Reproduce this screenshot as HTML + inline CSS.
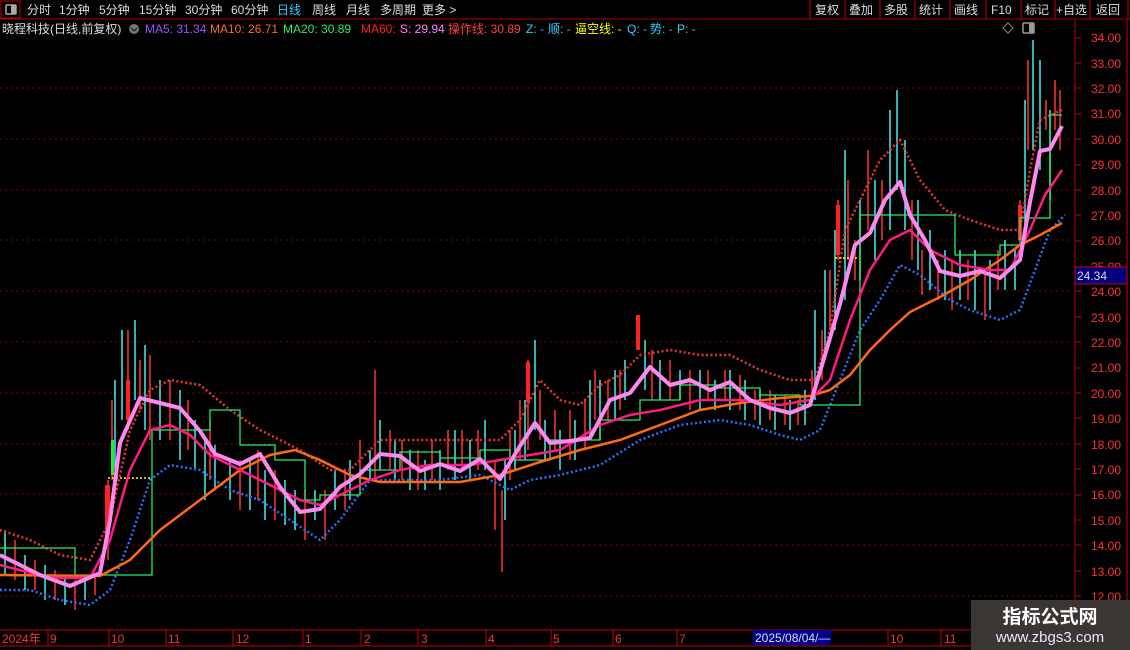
<!DOCTYPE html>
<html><head><meta charset="utf-8"><style>
html,body{margin:0;padding:0;background:#000;width:1130px;height:650px;overflow:hidden;font-family:"Liberation Sans","Noto Sans CJK SC",sans-serif;}
</style></head><body>
<svg width="1130" height="650" style="position:absolute;left:0;top:0" font-family="Liberation Sans, Noto Sans CJK SC, sans-serif">
<rect x="0" y="0" width="1130" height="19" fill="#000"/>
<line x1="0" y1="19" x2="1130" y2="19" stroke="#a00" />
<rect x="1" y="1" width="19" height="17" fill="none" stroke="#c00"/>
<rect x="6" y="5" width="10" height="9" rx="1" fill="none" stroke="#aaa" stroke-width="1.5"/><rect x="11" y="5" width="5" height="9" fill="#aaa"/>
<g font-size="12" fill="#ddd">
<text x="27" y="14">分时</text><text x="59" y="14">1分钟</text><text x="99" y="14">5分钟</text><text x="139" y="14">15分钟</text><text x="185" y="14">30分钟</text><text x="231" y="14">60分钟</text>
<text x="277" y="14" fill="#3cf">日线</text><text x="312" y="14">周线</text><text x="346" y="14">月线</text><text x="380" y="14">多周期</text><text x="422" y="14">更多 &gt;</text>
</g>
<g stroke="#c00" fill="none">
<line x1="810" y1="0" x2="810" y2="19"/><line x1="845" y1="0" x2="845" y2="19"/><line x1="880" y1="0" x2="880" y2="19"/><line x1="915" y1="0" x2="915" y2="19"/><line x1="950" y1="0" x2="950" y2="19"/><line x1="986" y1="0" x2="986" y2="19"/><line x1="1021" y1="0" x2="1021" y2="19"/><line x1="1055" y1="0" x2="1055" y2="19"/><line x1="1090" y1="0" x2="1090" y2="19"/><line x1="1128" y1="0" x2="1128" y2="19"/>
</g>
<g font-size="12" fill="#ddd">
<text x="815" y="14">复权</text><text x="849" y="14">叠加</text><text x="884" y="14">多股</text><text x="919" y="14">统计</text><text x="954" y="14">画线</text><text x="991" y="14">F10</text><text x="1025" y="14">标记</text><text x="1056" y="14">+自选</text><text x="1096" y="14">返回</text>
</g>
<g font-size="12">
<text x="2" y="33" fill="#ddd">晓程科技(日线,前复权)</text>
<circle cx="134" cy="29" r="5" fill="#777"/><path d="M131 28 L134 31 L137 28" stroke="#222" fill="none" stroke-width="1.3"/>
<text x="145" y="33" fill="#a050ff">MA5: 31.34</text>
<text x="210" y="33" fill="#ff6a1a">MA10: 26.71</text>
<text x="283" y="33" fill="#22ee66">MA20: 30.89</text>
<text x="361" y="33" fill="#ff2020">MA60: -</text>
<text x="400" y="33" fill="#ff80ff">S: 29.94</text>
<text x="448" y="33" fill="#ff4040">操作线: 30.89</text>
<text x="526" y="33" fill="#3cf">Z: -</text>
<text x="548" y="33" fill="#3cf">顺: -</text>
<text x="575" y="33" fill="#ff0">逼空线: -</text>
<text x="627" y="33" fill="#3cf">Q: -</text>
<text x="650" y="33" fill="#3cf">势: -</text>
<text x="677" y="33" fill="#3cf">P: -</text>
</g>
<path d="M1008 23 L1013 28 L1008 33 L1003 28Z" stroke="#888" fill="none"/>
<rect x="1023" y="23" width="11" height="10" rx="1" fill="none" stroke="#999" stroke-width="1.5"/><rect x="1029" y="23" width="5" height="10" fill="#999"/>
<line x1="1075" y1="20" x2="1075" y2="650" stroke="#c00"/>
<line x1="1127" y1="20" x2="1127" y2="650" stroke="#c00"/>
<g stroke="#a00" stroke-dasharray="1.5 4">
<line x1="0" y1="88" x2="1072" y2="88"/><line x1="0" y1="139" x2="1072" y2="139"/><line x1="0" y1="190" x2="1072" y2="190"/><line x1="0" y1="240" x2="1072" y2="240"/><line x1="0" y1="291" x2="1072" y2="291"/><line x1="0" y1="342" x2="1072" y2="342"/><line x1="0" y1="393" x2="1072" y2="393"/><line x1="0" y1="444" x2="1072" y2="444"/><line x1="0" y1="494" x2="1072" y2="494"/><line x1="0" y1="545" x2="1072" y2="545"/><line x1="0" y1="596" x2="1072" y2="596"/>
</g>
<g font-size="12" fill="#ff3030">
<text x="1091" y="42">34.00</text><text x="1091" y="68">33.00</text><text x="1091" y="93">32.00</text><text x="1091" y="118">31.00</text><text x="1091" y="144">30.00</text><text x="1091" y="169">29.00</text><text x="1091" y="195">28.00</text><text x="1091" y="220">27.00</text><text x="1091" y="245">26.00</text><text x="1091" y="271">25.00</text><text x="1091" y="296">24.00</text><text x="1091" y="322">23.00</text><text x="1091" y="347">22.00</text><text x="1091" y="372">21.00</text><text x="1091" y="398">20.00</text><text x="1091" y="423">19.00</text><text x="1091" y="449">18.00</text><text x="1091" y="474">17.00</text><text x="1091" y="499">16.00</text><text x="1091" y="525">15.00</text><text x="1091" y="550">14.00</text><text x="1091" y="576">13.00</text><text x="1091" y="601">12.00</text>
</g>
<g stroke="#c00"><path d="M1076 38h5M1076 63h5M1076 88h5M1076 114h5M1076 139h5M1076 165h5M1076 190h5M1076 215h5M1076 241h5M1076 291h5M1076 317h5M1076 342h5M1076 368h5M1076 393h5M1076 418h5M1076 444h5M1076 469h5M1076 495h5M1076 520h5M1076 545h5M1076 571h5M1076 596h5"/></g>
<rect x="1075" y="267" width="52" height="17" fill="#000080" stroke="#c00"/>
<text x="1077" y="280" font-size="12" fill="#ddd">24.34</text>
<g stroke="#4ee" stroke-width="1.5" fill="none">
<path d="M5 530V575M25 555V590M45 565V600M65 575V605M85 580V600M115 380V470M122 330V420M135 320V400M145 345V430M160 380V440M180 390V460M195 420V470M205 440V500M215 445V490M230 460V500M250 460V510M265 470V520M285 480V525M295 490V530M315 490V520M335 470V510M350 460V500M370 450V480M380 420V470M395 440V480M410 450V490M425 460V490M440 450V490M455 430V480M470 440V480M485 420V470M505 460V520M515 430V470M525 400V460M535 340V430M545 420V460M560 430V470M575 420V460M590 380V440M600 380V440M615 370V420M625 360V400M645 340V390M660 360V400M680 370V400M700 370V410M715 380V410M730 370V410M745 380V420M760 390V425M775 395V430M790 400V430M805 390V425M815 310V400M825 270V360M835 230V330M845 150V300M860 200V280M875 180V260M890 110V230M897 90V190M905 140V230M918 200V270M930 230V290M945 250V300M960 250V300M975 250V310M990 260V310M1005 240V290M1015 250V290M1025 100V230M1033 40V150M1040 60V170M1050 110V200"/>
</g>
<g stroke="#f33" stroke-width="1.5" fill="none">
<path d="M15 540V580M35 560V590M55 570V600M75 580V610M95 575V595M108 480V560M112 400V480M128 330V430M140 360V410M150 355V440M170 380V440M188 400V450M210 420V480M240 460V510M258 450V500M275 470V520M305 490V540M325 490V540M345 470V510M360 440V490M375 370V480M390 430V470M402 440V480M418 450V490M432 440V480M448 430V470M462 430V470M478 430V470M495 460V530M502 490V572M510 430V480M520 400V460M528 360V450M540 390V440M555 410V450M570 410V460M585 400V450M595 370V420M608 380V420M620 370V410M638 315V350M652 350V400M670 360V400M690 370V410M708 370V400M725 370V400M740 375V410M755 390V420M770 390V420M785 395V425M798 400V425M812 370V400M822 330V380M830 270V330M838 200V260M848 180V260M855 240V280M868 150V230M882 180V240M912 200V260M922 250V295M938 260V300M952 260V310M968 260V300M985 270V320M998 250V290M1020 200V240M1028 60V150M1046 100V130M1055 80V130M1060 90V150"/>
</g>
<g fill="#f22"><rect x="105" y="485" width="5" height="50"/><rect x="126" y="380" width="4" height="40"/><rect x="636" y="315" width="4" height="35"/><rect x="836" y="205" width="4" height="50"/><rect x="1018" y="205" width="4" height="35"/><rect x="526" y="362" width="4" height="40"/></g>
<rect x="111" y="440" width="3" height="35" fill="#2e2"/>
<polyline fill="none" stroke="#e33" stroke-width="2.5" stroke-dasharray="2 2.5" points="0,530 30,540 60,555 90,560 110,520 130,430 150,390 170,380 200,385 230,410 260,430 280,440 300,450 330,470 350,470 380,440 410,440 440,440 470,440 500,440 520,420 540,380 560,400 580,405 600,385 620,375 640,355 670,350 700,355 730,355 760,370 790,380 815,380 830,330 845,230 860,200 880,160 900,140 920,180 945,210 970,220 1000,230 1020,230 1030,170 1040,120 1062,110"/>
<polyline fill="none" stroke="#2a6fff" stroke-width="2.5" stroke-dasharray="2 2.5" points="0,590 30,590 60,600 90,605 110,590 130,540 150,480 170,465 200,470 230,490 260,500 290,520 320,540 340,520 370,480 400,480 440,480 480,475 510,490 530,480 560,475 600,465 640,440 680,425 720,420 750,425 780,435 800,440 820,430 840,380 860,330 880,300 900,265 920,275 950,300 970,310 1000,320 1020,310 1035,270 1050,230 1065,215"/>
<path fill="none" stroke="#2e6" stroke-width="1.3" d="M0 548H75V575H152V430H210V410H240V445H275V460H305V500H320V495H360V470H400V452H440V458H480V450H510V460H550V440H600V420H640V400H680V385H720V388H760V395H800V405H860V215H955V255H1000V245H1020V218H1050V115H1062"/>
<path stroke="#ff0" stroke-width="1.5" stroke-dasharray="2 2" d="M108 478H150M835 258H858"/>
<polyline fill="none" stroke="#ff6a10" stroke-width="2.5" points="0,575 100,576 130,560 160,530 200,500 240,470 270,455 295,450 320,460 350,475 380,482 420,482 460,482 500,475 540,462 580,450 620,440 660,425 700,410 740,403 780,398 810,396 830,390 850,375 870,350 890,330 910,312 940,297 970,280 1000,260 1020,245 1040,235 1062,223"/>
<polyline fill="none" stroke="#ff1a80" stroke-width="2.5" points="0,565 50,578 90,578 110,540 130,470 150,430 170,425 190,435 210,455 240,470 270,485 300,500 320,505 340,495 370,480 400,470 430,465 470,465 500,460 530,455 560,450 600,425 630,415 660,410 700,400 740,400 780,405 810,400 830,380 850,320 870,270 890,240 910,230 930,250 960,265 990,270 1010,270 1030,230 1045,195 1062,170"/>
<polyline fill="none" stroke="#ff88ee" stroke-width="4" stroke-linejoin="round" points="0,555 20,565 40,575 70,586 100,573 110,520 120,443 140,398 160,403 180,408 200,431 215,454 240,464 260,454 280,487 300,512 320,509 340,487 360,474 380,454 400,456 420,471 440,464 460,471 480,459 500,479 520,446 535,423 550,443 570,441 590,438 610,400 630,393 650,367 670,385 690,380 710,390 730,382 750,400 770,408 790,413 810,405 825,355 840,304 855,245 870,233 885,200 900,182 910,215 925,240 940,271 960,276 980,271 1000,278 1020,260 1030,202 1040,151 1050,149 1062,126"/>
<line x1="0" y1="630" x2="1075" y2="630" stroke="#c00"/>
<line x1="0" y1="646" x2="1075" y2="646" stroke="#c00"/>
<g stroke="#c00"><path d="M48 630V646M109 630V646M166 630V646M233 630V646M303 630V646M361 630V646M418 630V646M486 630V646M551 630V646M613 630V646M677 630V646M888 630V646M941 630V646"/></g>
<g font-size="12" fill="#ff3030">
<text x="2" y="643">2024年</text><text x="50" y="643">9</text><text x="111" y="643">10</text><text x="168" y="643">11</text><text x="236" y="643">12</text><text x="305" y="643">1</text><text x="364" y="643">2</text><text x="421" y="643">3</text><text x="488" y="643">4</text><text x="553" y="643">5</text><text x="615" y="643">6</text><text x="679" y="643">7</text><text x="890" y="643">10</text><text x="944" y="643">11</text>
</g>
<rect x="753" y="630" width="78" height="15" fill="#000090"/>
<text x="755" y="642" font-size="12" fill="#ddd">2025/08/04/—</text>
<rect x="971" y="600" width="159" height="50" fill="#3b3533"/>
<text x="1050" y="623" font-size="19" font-weight="bold" fill="#fff" text-anchor="middle">指标公式网</text>
<text x="1050" y="642" font-size="15" fill="#e8e8ff" text-anchor="middle">www.zbgs3.com</text>
</svg>
</body></html>
